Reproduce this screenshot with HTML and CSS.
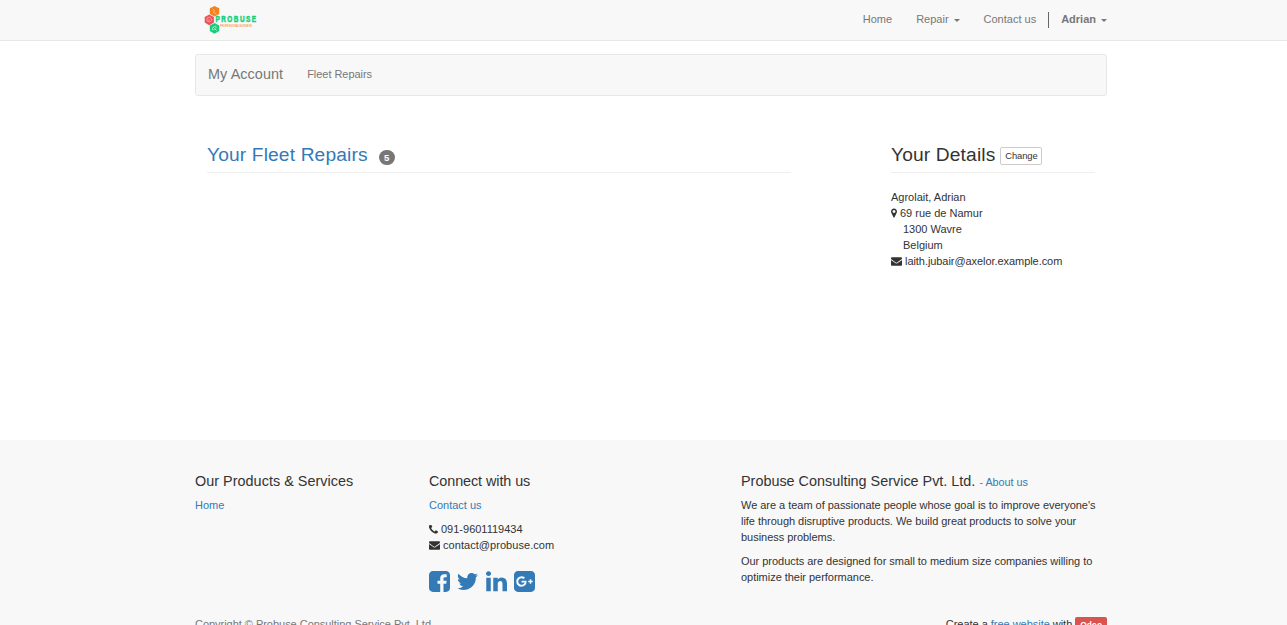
FILE: index.html
```html
<!DOCTYPE html>
<html lang="en">
<head>
<meta charset="utf-8">
<title>My Account</title>
<link rel="stylesheet" href="styles.css">
</head>
<body>
<svg class="defs" aria-hidden="true">
  <symbol id="envelope" viewBox="0 256 1792 1408"><path d="M1792 710v794q0 66-47 113t-113 47h-1472q-66 0-113-47t-47-113v-794q44 49 101 87 362 246 497 345 57 42 92.500 65.500t94.500 48 110 24.500h2q51 0 110-24.500t94.500-48 92.500-65.500q170-123 498-345 57-39 100-87zm0-294q0 79-49 151t-122 123q-376 261-468 325-10 7-42.500 31t-54 38.500-52 32.500-57.500 27-50 9h-2q-23 0-50-9t-57.500-27-52-32.500-54-38.500-42.500-31q-91-64-262-182.500t-205-142.500q-62-42-117-115.500t-55-136.500q0-78 41.500-130t118.500-52h1472q65 0 112.500 47t47.500 113z"/></symbol>
</svg>
<header class="topbar">
  <div class="container topbar-row">
    <svg class="logo" viewBox="0 0 62 36" role="img" aria-label="Probuse">
      <path fill="#f58220" d="M14.500 4l4.700 2.300v5.600l-4.700 2.500-4.700-2.500V6.300z"/>
      <path fill="#ee5057" d="M9.300 12.600l4.600 2.400v5.600l-4.600 2.700-4.600-2.700V15z"/>
      <path fill="#12cf78" d="M14.500 21l4.700 2.500v5.500l-4.700 2.700-4.700-2.700v-5.500z"/>
      <path class="logo-lines" d="M12.500 7l2 1.500-1 2 3 1.500M7 16l3-1 2 3-2 2-3-1zm1 2h2M12 28l1-3 3-1v3l-4 1m1-3l4 4"/>
      <text class="logo-name" transform="translate(15.500 20) scale(.75 1)" textLength="54">PROBUSE</text>
      <text class="logo-tag" x="20" y="25" textLength="32">PROFESSIONAL BUSINESS</text>
    </svg>
    <nav class="menu">
      <a>Home</a>
      <a>Repair<i class="caret"></i></a>
      <a>Contact us</a>
      <a class="user"><b>Adrian</b><i class="caret"></i></a>
    </nav>
  </div>
</header>
<main class="container main">
  <div class="account-bar"><span class="account-title">My Account</span><a>Fleet Repairs</a></div>
  <div class="columns">
    <section class="repairs">
      <h3><a class="link">Your Fleet Repairs</a><span class="badge">5</span></h3>
    </section>
    <section class="details">
      <h3><span>Your Details</span><a class="change">Change</a></h3>
      <address>
        <div>Agrolait, Adrian</div>
        <div class="icon-row"><svg class="marker" viewBox="384 128 1024 1536"><path d="M1152 640q0-106-75-181t-181-75-181 75-75 181 75 181 181 75 181-75 75-181zm256 0q0 109-33 179l-364 774q-16 33-47.500 52t-67.500 19-67.500-19-46.500-52l-365-774q-33-70-33-179 0-212 150-362t362-150 362 150 150 362z"/></svg>69 rue de Namur</div>
        <div class="indent">1300 Wavre</div>
        <div class="indent">Belgium</div>
        <div class="icon-row"><svg class="mail"><use href="#envelope"/></svg><span class="email">laith.jubair@axelor.example.com</span></div>
      </address>
    </section>
  </div>
</main>
<footer class="footer">
  <div class="container">
    <div class="footer-grid">
      <section>
        <h4>Our Products &amp; Services</h4>
        <p><a class="link">Home</a></p>
      </section>
      <section>
        <h4 class="connect">Connect with us</h4>
        <p><a class="link">Contact us</a></p>
        <div class="icon-row"><svg class="phone" viewBox="192 256 1408 1408"><path transform="translate(0 64)" d="M1600 1240q0 27-10 70.500t-21 68.500q-21 50-122 106-94 51-186 51-27 0-53-3.500t-57.500-12.500-47-14.500-55.500-20.500-49-18q-98-35-175-83-127-79-264-216t-216-264q-48-77-83-175-3-9-18-49t-20.500-55.500-14.500-47-12.500-57.500-3.500-53q0-92 51-186 56-101 106-122 25-11 68.500-21t70.500-10q14 0 21 3 18 6 53 76 11 19 30 54t35 63.500 31 53.500q3 4 17.500 25t21.500 35.500 7 28.500q0 20-28.500 50t-62 55-62 53-28.500 46q0 9 5 22.500t8.500 20.500 14 24 11.500 19q76 137 174 235t235 174q2 1 19 11.500t24 14 20.500 8.500 22.500 5q18 0 46-28.500t53-62 55-62 50-28.500q14 0 28.500 7t35.500 21.500 25 17.500q25 15 53.500 31t63.500 35 54 30q70 35 76 53 3 7 3 21z"/></svg><span>091-9601119434</span></div>
        <div class="icon-row"><svg class="mail"><use href="#envelope"/></svg><span class="contact-mail">contact@probuse.com</span></div>
        <div class="social">
          <svg viewBox="128 128 1536 1536"><path d="M1376 128q119 0 203.500 84.500t84.500 203.500v960q0 119-84.500 203.500t-203.500 84.500h-188v-595h199l30-232h-229v-148q0-56 23.500-84t91.500-28l122-1v-207q-63-9-178-9-136 0-217.500 80t-81.500 226v171h-200v232h200v595h-532q-119 0-203.500-84.500t-84.500-203.500v-960q0-119 84.500-203.500t203.500-84.500h960z"/></svg>
          <svg viewBox="108 128 1576 1536"><path d="M1684 408q-67 98-162 167 1 14 1 42 0 130-38 259.500t-115.500 248.500-184.500 210.500-258 146-323 54.500q-271 0-496-145 35 4 78 4 225 0 401-138-105-2-188-64.500t-114-159.500q33 5 61 5 43 0 85-11-112-23-185.500-111.500t-73.500-205.500v-4q68 38 146 41-66-44-105-115t-39-154q0-88 44-163 121 149 294.500 238.500t371.500 99.500q-8-38-8-74 0-134 94.500-228.500t228.500-94.500q140 0 236 102 109-21 205-78-37 115-142 178 93-10 186-50z"/></svg>
          <svg viewBox="128 128 1536 1536"><path d="M477 625v991h-330v-991h330zm21-306q1 73-50.500 122t-135.500 49h-2q-82 0-132-49t-50-122q0-74 51.500-122.500t134.500-48.500 133 48.500 51 122.500zm1166 729v568h-329v-530q0-105-40.500-164.500t-126.500-59.500q-63 0-105.500 34.500t-63.500 85.500q-11 30-11 81v553h-329q2-399 2-647t-1-296l-1-48h329v144h-2q20-32 41-56t56.500-52 87-43.500 114.500-15.500q171 0 275 113.500t104 332.500z"/></svg>
          <svg viewBox="128 128 1536 1536"><path fill-rule="evenodd" d="M1045 905q0-26-6-64h-362v132h217q-3 24-16.500 50t-37.500 53-66.500 44.500-96.500 17.500q-99 0-169-71t-70-171 70-171 169-71q92 0 153 59l104-101q-108-100-257-100-160 0-272 112.500t-112 271.500 112 271.500 272 112.500q165 0 266.500-105t101.500-270zm345 46h109v-110h-109v-110h-110v110h-110v110h110v110h110v-110zm274-535v960q0 119-84.500 203.500t-203.500 84.500h-960q-119 0-203.500-84.500t-84.500-203.500v-960q0-119 84.500-203.500t203.500-84.500h960q119 0 203.500 84.500t84.500 203.500z"/></svg>
        </div>
      </section>
      <section class="about">
        <h4>Probuse Consulting Service Pvt. Ltd. <small>- <a class="link">About us</a></small></h4>
        <p>We are a team of passionate people whose goal is to improve everyone's<br>life through disruptive products. We build great products to solve your<br>business problems.</p>
        <p>Our products are designed for small to medium size companies willing to<br>optimize their performance.</p>
      </section>
    </div>
    <div class="bottom"><span class="copyright">Copyright © Probuse Consulting Service Pvt. Ltd.</span><span>Create a <a class="link">free website</a> with <b class="odoo">Odoo</b></span></div>
  </div>
</footer>
</body>
</html>
```
FILE: styles.css
```css
* { box-sizing: border-box; }
html, body { height: 625px; overflow: hidden; }
body { margin: 0; font: 11px/16px "Liberation Sans", Arial, sans-serif; color: #333; background: #fff; }
svg { fill: currentColor; flex: none; }
.defs { position: absolute; width: 0; height: 0; }
.container { width: 912px; margin: 0 0 0 195px; }
.link { color: #337ab7; }
.topbar { height: 41px; background: #f8f8f8; border-bottom: 1px solid #e7e7e7; color: #777; }
.topbar-row { display: flex; justify-content: space-between; }
.logo { width: 62px; height: 36px; margin: 2px 0 0 5px; }
.logo-lines { fill: none; stroke: #fff; stroke-opacity: .6; stroke-width: .7; }
.logo-name { font: bold 8.500px "Liberation Sans", sans-serif; fill: #12cf78; stroke: #12cf78; stroke-width: .5; }
.logo-tag { font: 2.600px "Liberation Sans", sans-serif; fill: #f58220; }
.menu { display: flex; margin-top: 12px; }
.menu a { height: 16px; line-height: 15px; margin-left: 24px; white-space: nowrap; }
.menu .user { margin-left: 12px; padding-left: 12px; border-left: 1px solid #666; }
.caret { display: inline-block; margin-left: 5px; vertical-align: middle; border: 3px solid transparent; border-top-color: #777; border-bottom: 0; }
.account-bar { display: flex; align-items: center; height: 42px; margin-top: 13px; padding: 0 12px 2px; background: #f8f8f8; border: 1px solid #e7e7e7; border-radius: 3px; color: #777; letter-spacing: -.04px; }
.account-title { font-size: 14.4px; letter-spacing: .08px; margin-right: 24px; }
.columns { display: flex; justify-content: space-between; padding: 0 12px; }
.repairs { width: 584px; }
.details { width: 204px; }
h3, h4 { font-weight: normal; margin: 0; }
h3 { display: flex; align-items: center; height: 37px; margin-top: 40px; padding-top: 1px; border-bottom: 1px solid #eee; font-size: 19.2px; line-height: 35px; letter-spacing: .14px; }
.badge { margin: 5px 0 0 11px; width: 16px; height: 15px; border-radius: 8px; background: #777; color: #fff; font: bold 9.600px/15px "Liberation Sans", sans-serif; letter-spacing: 0; text-align: center; }
.change { width: 42px; height: 18px; margin: 2px 0 0 5px; border: 1px solid #ccc; border-radius: 2px; font-size: 9.400px; line-height: 16px; letter-spacing: -.05px; text-align: center; }
address { font-style: normal; margin-top: 16px; }
.icon-row { display: flex; align-items: center; height: 16px; white-space: nowrap; }
.indent { padding-left: 12px; }
.marker { width: 6px; height: 10px; margin-right: 3px; }
.mail { width: 11px; height: 9px; margin-right: 3px; }
.email { letter-spacing: -.06px; }
.contact-mail { letter-spacing: .05px; }
.phone { width: 9px; height: 9px; margin-right: 3px; }
.footer { position: absolute; top: 440px; left: 0; right: 0; height: 185px; overflow: hidden; background: #f8f8f8; }
.footer-grid { display: grid; grid-template-columns: 234px 312px 366px; padding-top: 33px; height: 175px; white-space: nowrap; }
h4 { height: 16px; font-size: 14.4px; line-height: 16px; margin-bottom: 8px; letter-spacing: .03px; }
.connect { letter-spacing: -.08px; }
.about h4 { letter-spacing: 0; }
h4 small { font-size: 10.8px; color: #777; }
p { margin: 0 0 8px; }
.about p { letter-spacing: -.03px; }
.social { display: flex; gap: 7.400px; margin-top: 18px; color: #337ab7; }
.social svg { width: 21px; height: 21px; }
.bottom { display: flex; justify-content: space-between; line-height: 18px; letter-spacing: -.03px; }
.copyright { color: #777; }
.odoo { display: inline-block; height: 16px; padding: 0 5px; border-radius: 2px; background: #d9534f; color: #fff; font-size: 8.400px; line-height: 16px; }
```
